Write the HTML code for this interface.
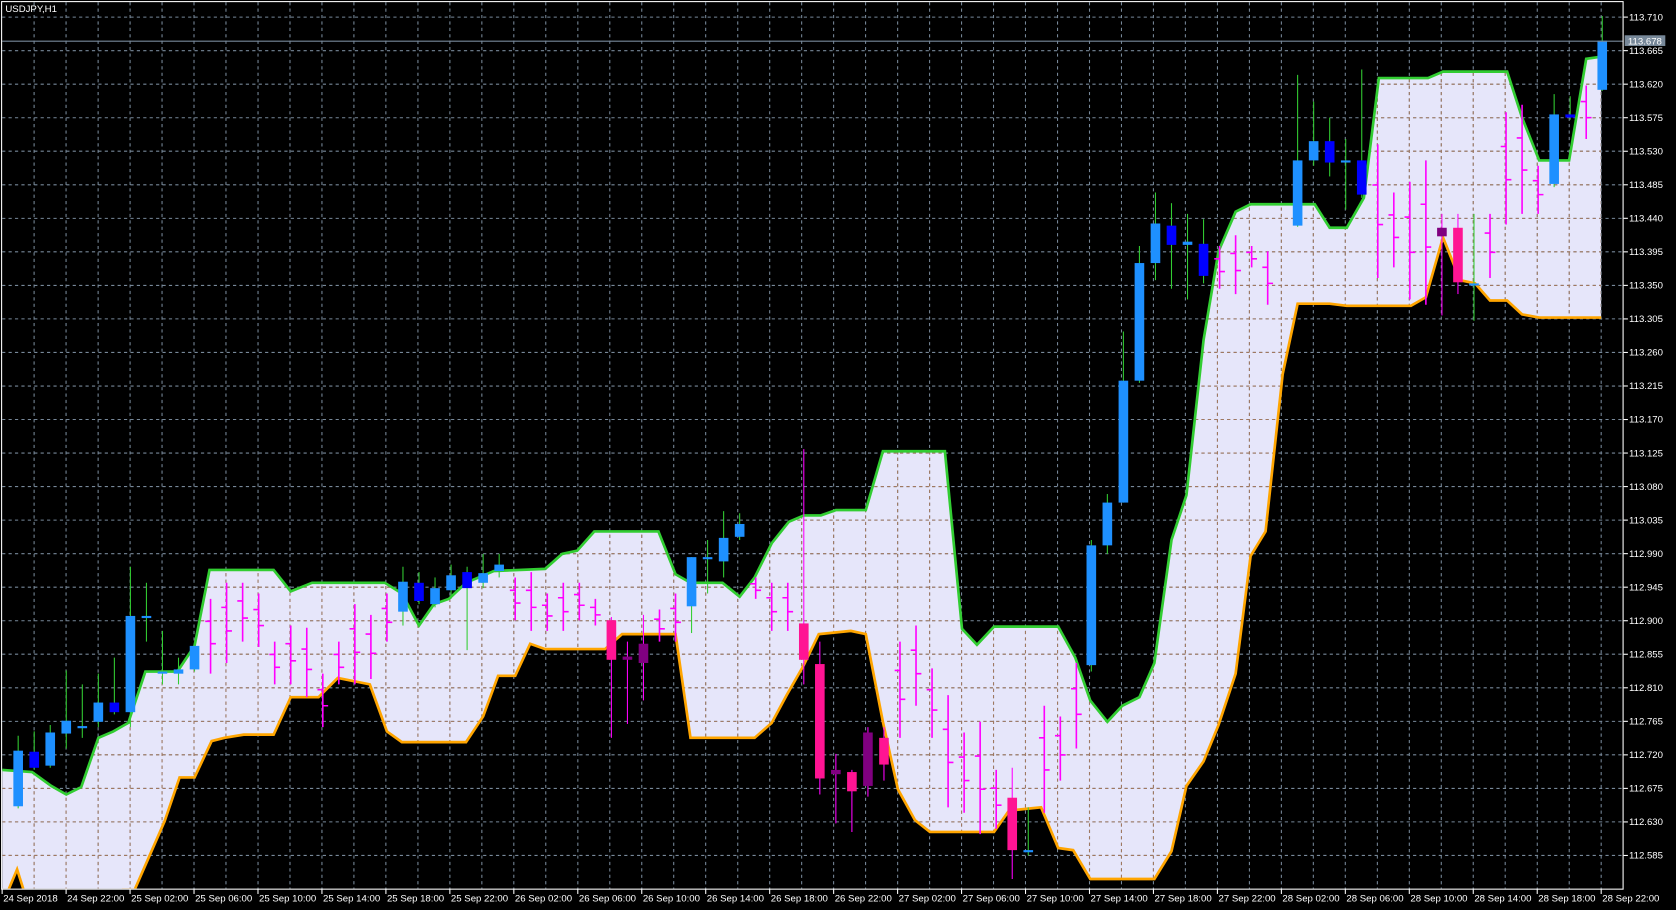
<!DOCTYPE html>
<html><head><meta charset="utf-8"><style>
html,body{margin:0;padding:0;background:#000;width:1676px;height:910px;overflow:hidden}
svg{display:block}
text{font-family:"Liberation Sans",sans-serif;font-size:9px;fill:#fff}
</style></head><body>
<svg id="s" width="1676" height="910" viewBox="0 0 1568 851" preserveAspectRatio="none" xmlns="http://www.w3.org/2000/svg"></svg>
<script>
var NS="http://www.w3.org/2000/svg",s=document.getElementById('s'),h='';
var up=[[2,720],[30,722],[48,735],[62,743],[76,736],[92,690],[106,684],[120,676],[136,628],[166,628],[182,604],[196,533],[256,533],[272,553],[292,545],[360,545],[376,555],[392,585],[406,565],[420,560],[436,545],[462,534],[510,532],[526,518],[540,515],[556,497],[616,497],[632,537],[646,545],[676,545],[692,558],[706,540],[722,508],[738,488],[752,482],[768,482],[782,477],[810,477],[826,422],[884,422],[900,588],[914,603],[930,586],[990,586],[1006,615],[1020,655],[1036,675],[1050,660],[1066,652],[1080,620],[1096,505],[1110,463],[1126,318],[1140,235],[1156,198],[1170,191],[1230,191],[1244,213],[1260,213],[1276,185],[1290,73],[1336,73],[1350,67],[1410,67],[1424,110],[1440,150],[1468,150],[1484,55],[1498,53]];
var lo=[[114,832],[126,832],[140,800],[154,768],[168,727],[182,727],[198,693],[210,690],[228,687],[256,687],[272,652],[298,652],[316,634],[346,640],[362,684],[376,694],[436,694],[452,670],[466,632],[482,632],[496,602],[510,607],[566,607],[582,593],[632,593],[646,690],[706,690],[722,676],[736,650],[752,622],[766,593],[796,590],[810,593],[826,675],[840,738],[856,767],[870,778],[930,778],[944,758],[974,755],[990,793],[1004,795],[1020,822],[1080,822],[1096,796],[1110,735],[1126,712],[1140,678],[1156,630],[1170,520],[1184,497],[1200,350],[1214,284],[1244,284],[1260,286],[1320,286],[1334,278],[1350,222],[1366,262],[1380,265],[1394,281],[1410,281],[1424,294],[1440,297],[1498,297]];
function pts(a){return a.map(function(p){return p.join(',')}).join(' ')}
var poly=up.concat(lo.slice().reverse()).concat([[22,832],[16,813],[8,832],[2,832]]);
h+='<defs><clipPath id="c"><rect x="2" y="2" width="1517" height="829"/></clipPath><clipPath id="f"><polygon points="'+pts(poly)+'"/></clipPath></defs>';
h+='<g clip-path="url(#c)"><polygon points="'+pts(poly)+'" fill="#e6e6fa"/>';
var g='';
for(var k=0;k<26;k++){var y=16+k*31.36;g+='M2 '+y.toFixed(1)+'H1519';}
for(var k=1;k<51;k++){var x=2+k*29.92;g+='M'+x.toFixed(1)+' 2V831';}
h+='<path d="'+g+'" stroke="#778899" stroke-width="1" stroke-dasharray="3,3" fill="none"/>';
h+='<path clip-path="url(#f)" d="'+g+'" stroke="#a07860" stroke-width="1" stroke-dasharray="3,3" fill="none"/>';
h+='<polyline points="'+pts(up)+'" stroke="#32cd32" stroke-width="2.5" fill="none"/>';
h+='<polyline points="'+pts(lo)+'" stroke="#ffa500" stroke-width="2.5" fill="none"/>';
h+='<polyline points="8,832 16,813 22,832" stroke="#ffa500" stroke-width="2.5" fill="none"/>';
var C={b:'#1e90ff',d:'#0000ff',p:'#ff1493',u:'#800080'};
var cs=[[17,702,754,688,756,'b'],[32,703,718,684,720,'d'],[47,685,716,678,718,'b'],[62,674,686,627,700,'b'],[77,679,681,640,690,'b'],[92,657,675,630,680,'b'],[107,657,666,615,668,'d'],[122,576,666,530,680,'b'],[137,576,578,545,600,'b'],[152,628,630,590,640,'b'],[167,626,630,615,640,'b'],[182,604,626,600,628,'b'],
[377,544,572,530,585,'b'],[392,545,562,535,565,'d'],[407,550,565,540,568,'b'],[422,538,552,528,560,'b'],[437,535,550,530,608,'d'],[452,536,545,518,550,'b'],[467,528,534,518,540,'b'],
[572,580,617,577,690,'p'],[587,614,617,600,677,'u'],[602,602,620,575,655,'u'],[647,521,567,521,592,'b'],[662,521,523,505,555,'b'],[677,503,525,478,540,'b'],[692,490,502,480,505,'b'],
[752,583,617,420,640,'p'],[767,621,728,600,743,'p'],[782,720,724,705,770,'u'],[797,722,740,720,778,'p'],[812,685,735,680,745,'u'],[827,690,715,680,730,'p'],
[947,746,795,718,822,'p'],[962,795,797,755,800,'b'],
[1021,510,622,505,628,'b'],[1036,470,510,462,518,'b'],[1051,356,470,310,470,'b'],[1066,246,356,230,358,'b'],[1081,209,246,180,262,'b'],[1096,211,229,190,270,'d'],[1111,226,229,200,280,'b'],[1126,228,258,205,265,'d'],
[1214,150,211,70,212,'b'],[1229,132,150,95,155,'b'],[1244,132,152,110,165,'d'],[1259,150,152,130,196,'b'],[1274,150,182,65,185,'d'],
[1349,213,221,200,295,'u'],[1364,213,264,200,275,'p'],[1379,265,267,200,300,'b'],[1454,107,172,88,175,'b'],[1469,107,110,90,112,'d'],[1499,38,84,15,85,'b']];
cs.forEach(function(c){var wc=(c[5]=='p'||c[5]=='u')?'#ff00ff':'#32cd32';
h+='<line x1="'+c[0]+'" y1="'+c[3]+'" x2="'+c[0]+'" y2="'+c[4]+'" stroke="'+wc+'" stroke-width="1"/>';
h+='<rect x="'+(c[0]-4.5)+'" y="'+c[1]+'" width="9" height="'+Math.max(2,c[2]-c[1])+'" fill="'+C[c[5]]+'"/>';});
var ms=[[197,560,630],[212,545,620],[227,545,600],[242,555,605],[257,600,640],[272,585,640],[287,587,652],[302,630,680],[317,600,640],[332,565,640],[347,575,635],[362,555,600],[482,540,580],[497,535,590],[512,555,590],[527,545,590],[542,545,580],[557,560,585],[617,570,600],[632,555,600],[707,540,560],[722,545,590],[737,545,590],[842,600,690],[857,585,660],[872,625,690],[887,650,755],[902,685,760],[917,675,780],[932,720,775],[977,660,760],[992,670,730],[1007,620,700],[1141,230,270],[1156,220,275],[1171,230,250],[1186,235,285],[1289,135,260],[1304,180,250],[1319,170,280],[1334,150,285],[1394,200,260],[1409,105,210],[1424,98,200],[1439,155,200],[1484,80,130]];
ms.forEach(function(m,i){var a=m[1]+(m[2]-m[1])*0.3,b=m[1]+(m[2]-m[1])*0.6;
h+='<path d="M'+m[0]+' '+m[1]+'V'+m[2]+'M'+(m[0]-5)+' '+a.toFixed(0)+'H'+m[0]+'M'+m[0]+' '+b.toFixed(0)+'H'+(m[0]+5)+'" stroke="#ff00ff" stroke-width="1.5" fill="none"/>';});
h+='</g>';
h+='<line x1="2" y1="38.5" x2="1519" y2="38.5" stroke="#778899"/>';
h+='<rect x="1.5" y="1.5" width="1517" height="830" fill="none" stroke="#fff"/>';
h+='<text x="5" y="11">USDJPY,H1</text>';
for(var k=0;k<26;k++){var y=16+k*31.36;h+='<line x1="1519" y1="'+y+'" x2="1523" y2="'+y+'" stroke="#fff"/><text x="1524" y="'+(y+3)+'">'+(113.710-k*0.045).toFixed(3)+'</text>';}
h+='<rect x="1520" y="33" width="38" height="10" fill="#778899"/><text x="1523" y="41.5">113.678</text>';
var lab=['24 Sep 2018','24 Sep 22:00'],hr=['02:00','06:00','10:00','14:00','18:00','22:00'];
[25,26,27,28].forEach(function(d){hr.forEach(function(t){lab.push(d+' Sep '+t)})});
lab.forEach(function(t,i){var x=2+i*59.84;h+='<line x1="'+x+'" y1="831" x2="'+x+'" y2="836" stroke="#fff"/><text x="'+(x+1)+'" y="843">'+t+'</text>';});
s.innerHTML=h;
</script>
</body></html>
